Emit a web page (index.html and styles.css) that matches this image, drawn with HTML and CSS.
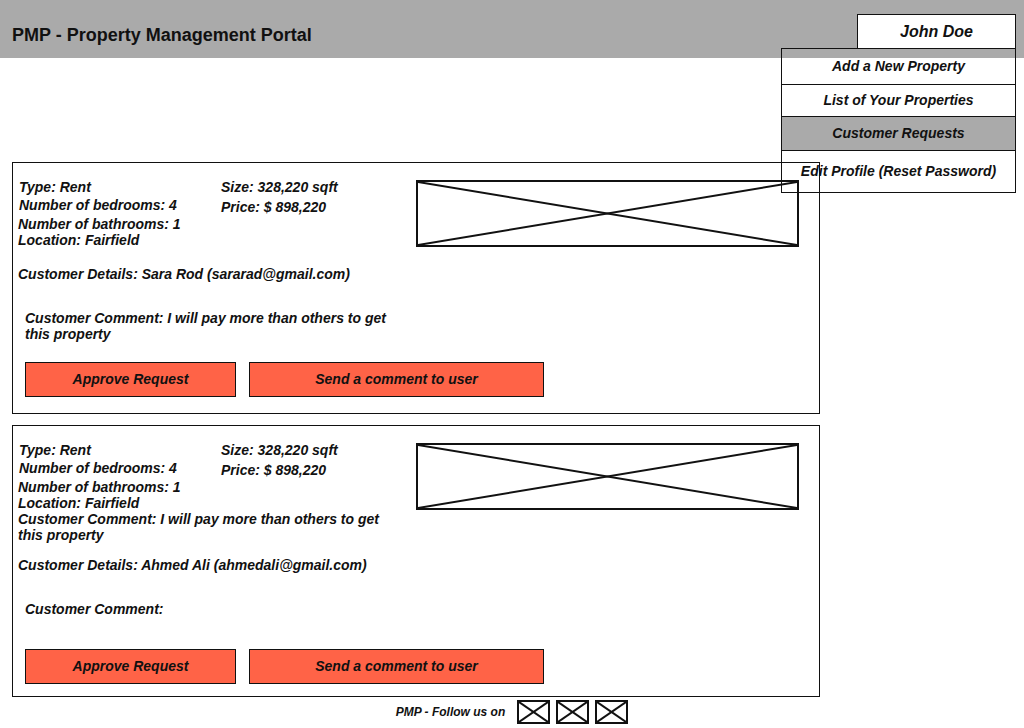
FILE: index.html
```html
<!DOCTYPE html>
<html lang="en">
<head>
  <meta charset="utf-8">
  <meta name="viewport" content="width=device-width, initial-scale=1">
  <title>PMP - Property Management Portal</title>
  <link rel="stylesheet" href="styles.css">
</head>
<body class="page">
  <header class="header">
    <h1 class="brand">PMP - Property Management Portal</h1>
    <div class="account">
      <button class="account-name" type="button" aria-expanded="true" aria-controls="account-menu">John Doe</button>
      <nav class="menu" id="account-menu" aria-label="Account">
        <a class="menu-item menu-item-first" href="#add">Add a New Property</a>
        <a class="menu-item" href="#list">List of Your Properties</a>
        <a class="menu-item menu-item-current" href="#requests" aria-current="page">Customer Requests</a>
        <a class="menu-item menu-item-last" href="#profile">Edit Profile (Reset Password)</a>
      </nav>
    </div>
  </header>

  <main class="requests">
    <article class="card">
      <div class="property">
        <div class="summary">
          <p>Type: Rent</p>
          <p>Number of bedrooms: 4</p>
        </div>
        <div class="pricing">
          <p>Size: 328,220 sqft</p>
          <p>Price: $ 898,220</p>
        </div>
        <div class="extra">
          <p>Number of bathrooms: 1</p>
          <p>Location: Fairfield</p>
        </div>
        <svg class="photo" role="img" aria-label="Property photo">
          <line x1="0" y1="0" x2="100%" y2="100%"/>
          <line x1="0" y1="100%" x2="100%" y2="0"/>
        </svg>
      </div>
      <p class="customer">Customer Details: Sara Rod (sararad@gmail.com)</p>
      <p class="comment">Customer Comment: I will pay more than others to get this property</p>
      <div class="actions">
        <button class="button" type="button">Approve Request</button>
        <button class="button button-wide" type="button">Send a comment to user</button>
      </div>
    </article>

    <article class="card card-compact">
      <div class="property">
        <div class="summary">
          <p>Type: Rent</p>
          <p>Number of bedrooms: 4</p>
        </div>
        <div class="pricing">
          <p>Size: 328,220 sqft</p>
          <p>Price: $ 898,220</p>
        </div>
        <div class="extra">
          <p>Number of bathrooms: 1</p>
          <p>Location: Fairfield</p>
          <p>Customer Comment: I will pay more than others to get this property</p>
        </div>
        <svg class="photo" role="img" aria-label="Property photo">
          <line x1="0" y1="0" x2="100%" y2="100%"/>
          <line x1="0" y1="100%" x2="100%" y2="0"/>
        </svg>
      </div>
      <p class="customer">Customer Details: Ahmed Ali (ahmedali@gmail.com)</p>
      <p class="comment">Customer Comment:</p>
      <div class="actions">
        <button class="button" type="button">Approve Request</button>
        <button class="button button-wide" type="button">Send a comment to user</button>
      </div>
    </article>
  </main>

  <footer class="footer">
    <span>PMP - Follow us on</span>
    <div class="social">
      <a class="social-link" href="#social-1" aria-label="Social page 1"><svg class="social-icon" aria-hidden="true"><line x1="0" y1="0" x2="100%" y2="100%"/><line x1="0" y1="100%" x2="100%" y2="0"/></svg></a>
      <a class="social-link" href="#social-2" aria-label="Social page 2"><svg class="social-icon" aria-hidden="true"><line x1="0" y1="0" x2="100%" y2="100%"/><line x1="0" y1="100%" x2="100%" y2="0"/></svg></a>
      <a class="social-link" href="#social-3" aria-label="Social page 3"><svg class="social-icon" aria-hidden="true"><line x1="0" y1="0" x2="100%" y2="100%"/><line x1="0" y1="100%" x2="100%" y2="0"/></svg></a>
    </div>
  </footer>
</body>
</html>
```
FILE: styles.css
```css
:root {
  --ink: #111;
  --grey: #aaa;
  --accent: #ff6347;
}

*,
*::before,
*::after {
  box-sizing: border-box;
}

.page {
  margin: 0;
  background: #fff;
  color: var(--ink);
  font: italic bold 14px/16px "Liberation Sans", Arial, sans-serif;
}

.page p {
  margin: 0;
}

.header {
  display: flex;
  justify-content: space-between;
  align-items: flex-start;
  height: 58px;
  padding: 14px 8px 0 12px;
  background: var(--grey);
}

.brand {
  margin: 10px 0 0;
  font-size: 18px;
  font-style: normal;
  line-height: 22px;
}

/* The menu hangs from the account button, over the page. */
.account {
  position: relative;
}

.account-name {
  display: block;
  width: 159px;
  height: 35px;
  padding: 0;
  border: 1px solid var(--ink);
  background: #fff;
  color: inherit;
  font: inherit;
  font-size: 16px;
}

.menu {
  position: absolute;
  top: 34px;
  right: 0;
  z-index: 1;
  width: 235px;
  border: 1px solid var(--ink);
}

.menu-item {
  display: block;
  padding: 7px 0 8px;
  color: inherit;
  text-align: center;
  text-decoration: none;
}

.menu-item + .menu-item {
  border-top: 1px solid var(--ink);
}

.menu-item-first {
  padding: 9px 0 10px;
}

.menu-item-current {
  padding: 8px 0 9px;
  background: var(--grey);
}

.menu-item-last {
  padding: 12px 0 13px;
}

.requests {
  display: grid;
  gap: 11px;
  max-width: 832px;
  padding: 104px 12px 0;
}

.card {
  --block-gap: 18px;
  --action-gap: 20px;
  padding: 16px 20px 16px 5px;
  border: 1px solid var(--ink);
}

.card-compact {
  --block-gap: 14px;
  --action-gap: 16px;
  padding-bottom: 12px;
}

.property {
  display: grid;
  grid-template-columns: 203px 195px 1fr;
  row-gap: 1px;
}

.summary,
.pricing {
  display: grid;
  align-content: start;
  gap: 2px;
}

.summary {
  padding-left: 1px;
}

.pricing {
  gap: 4px;
}

.extra {
  grid-column: 1 / 3;
  padding-right: 16px;
}

.photo {
  grid-area: 1 / 3 / 3 / 4;
  width: 100%;
  height: 67px;
  margin-top: 1px;
  border: 2px solid var(--ink);
  stroke: var(--ink);
  stroke-width: 2;
}

.customer {
  padding-top: var(--block-gap);
}

.comment {
  box-sizing: content-box;
  max-width: 380px;
  min-height: 32px;
  padding: 28px 0 var(--action-gap) 7px;
}

.actions {
  display: flex;
  gap: 13px;
  padding-left: 7px;
}

.button {
  width: 211px;
  height: 35px;
  padding: 0 0 2px;
  border: 1px solid var(--ink);
  background: var(--accent);
  color: inherit;
  font: inherit;
}

.button-wide {
  width: 295px;
}

.footer {
  display: flex;
  justify-content: center;
  align-items: center;
  gap: 12px;
  padding: 3px 0 4px;
  font-size: 12px;
}

.social {
  display: flex;
  gap: 6px;
}

.social-link {
  display: block;
}

.social-icon {
  display: block;
  width: 33px;
  height: 24px;
  border: 2px solid var(--ink);
  stroke: var(--ink);
  stroke-width: 2;
}
```
